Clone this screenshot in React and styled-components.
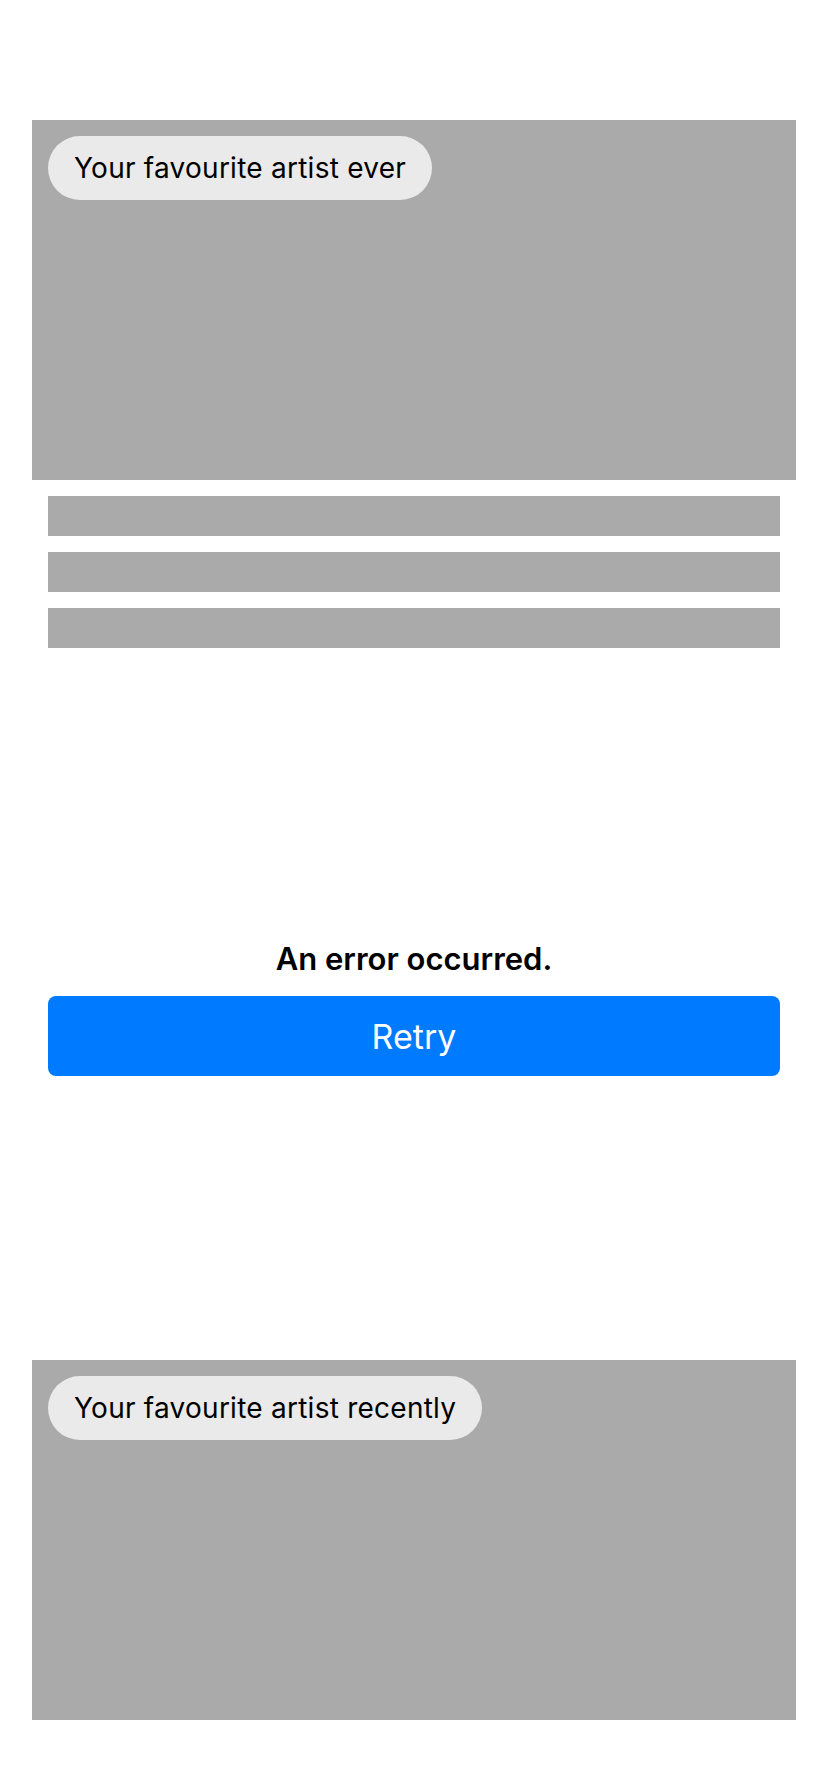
import React from "react";
import styled, { createGlobalStyle } from "styled-components";

const Global = createGlobalStyle`
    html, body {
        margin: 0;
        padding: 0;
        background: #fff;
        font-family: Inter, "Noto Sans", "Liberation Sans", sans-serif;
        color: #000;
    }
`

const Page = styled.div`
    width: 828px;
    min-height: 1792px;
    padding-top: 120px;
    box-sizing: border-box;
    display: flex;
    flex-direction: column;
`

const Card = styled.section`
    margin: 0 32px;
    height: 360px;
    background-color: #aaaaaa;
    padding: 16px;
    box-sizing: border-box;
    display: flex;
    align-items: flex-start;
`

const Pill = styled.div`
    height: 64px;
    padding: 0 26px 0 26px;
    border-radius: 32px;
    background-color: #eaeaea;
    display: flex;
    align-items: center;
    font-size: 28px;
    letter-spacing: 0.25px;
    color: #000;
`

const Lines = styled.div`
    display: flex;
    flex-direction: column;
    gap: 16px;
    padding: 16px 48px 0;
`

const Line = styled.div`
    height: 40px;
    background-color: #aaaaaa;
`

const ErrorBox = styled.div`
    display: flex;
    flex-direction: column;
    align-items: center;
    padding: 292px 48px 284px;
`

const ErrorText = styled.p`
    margin: 0 0 19px;
    font-size: 31px;
    line-height: 37px;
    font-weight: 600;
`

const Retry = styled.button`
    width: 100%;
    height: 80px;
    border: none;
    border-radius: 8px;
    background-color: #007aff;
    color: #fff;
    font-family: inherit;
    font-size: 34px;
    font-weight: 400;
    cursor: pointer;
`

export default function App() {
    return <Page>
        <Global/>
        <Card>
            <Pill>Your favourite artist ever</Pill>
        </Card>
        <Lines>
            <Line/>
            <Line/>
            <Line/>
        </Lines>
        <ErrorBox>
            <ErrorText>An error occurred.</ErrorText>
            <Retry>Retry</Retry>
        </ErrorBox>
        <Card>
            <Pill>Your favourite artist recently</Pill>
        </Card>
    </Page>
}
